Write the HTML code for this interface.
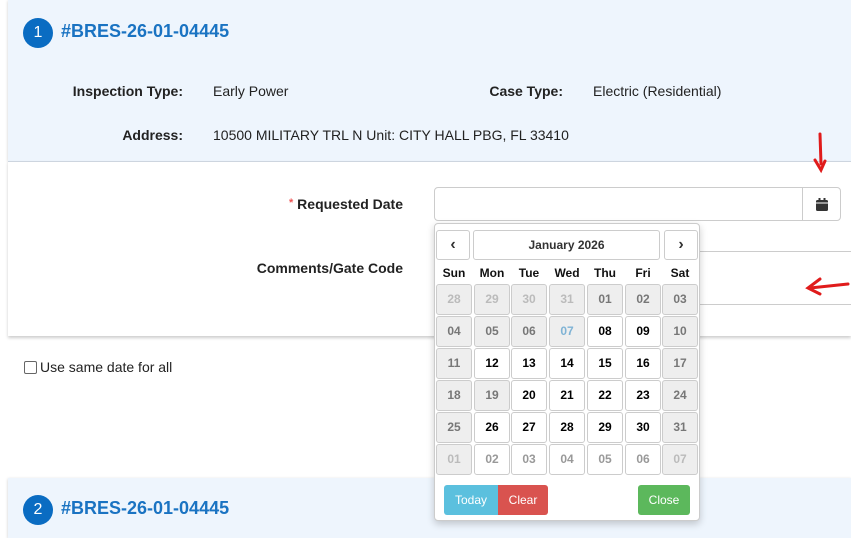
<!DOCTYPE html>
<html><head><meta charset="utf-8"><style>
*{box-sizing:border-box}
body{margin:0;width:851px;height:529px;overflow:hidden;background:#fff;font-family:"Liberation Sans",sans-serif;position:relative;color:#222}
.card{position:absolute;left:8px;right:0;background:#eef5fd;box-shadow:0 1px 3px rgba(0,0,0,.2)}
.num{position:absolute;left:15px;width:30px;height:30px;border-radius:50%;background:#0a6cc2;color:#fff;font-size:16px;text-align:center;line-height:30px}
.title{position:absolute;left:53px;font-size:18px;font-weight:bold;color:#1a73c2}
.lbl{position:absolute;font-size:14px;font-weight:bold;text-align:right}
.val{position:absolute;font-size:14px}
.white{position:absolute;left:8px;right:0;top:161px;height:175px;background:#fff;border-top:1px solid #cdd5df;box-shadow:0 2px 3px rgba(0,0,0,.2)}
.inp{position:absolute;border:1px solid #ccc;background:#fff}
.cal{position:absolute;left:434px;top:223px;width:266px;height:298px;background:#fff;border:1px solid #ccc;border-radius:4px;box-shadow:0 3px 8px rgba(0,0,0,.2);font-size:12px}
.b{position:absolute;border:1px solid #ccc;border-radius:3px;background:#fff;text-align:center;font-weight:bold;color:#333}
.d{position:absolute;width:36px;height:31px;border:1px solid #ccc;border-radius:3px;text-align:center;line-height:29px;font-weight:bold;font-size:12px}
.g{background:#eee;color:#777}.m{background:#eee;color:#bbb}.w{background:#fff;color:#000}.wm{background:#fff;color:#999}.t{background:#eee;color:#7fb3d5}
.dn{position:absolute;top:42px;width:36px;text-align:center;font-weight:bold;font-size:12px;color:#111}
.btn{position:absolute;top:261px;height:30px;color:#fff;font-size:12px;text-align:center;line-height:30px}
.c0{left:1px}.c1{left:39px}.c2{left:76px}.c3{left:114px}.c4{left:152px}.c5{left:190px}.c6{left:227px}
</style></head><body>
<div class="card" style="top:0;height:161px">
 <div class="num" style="top:18px">1</div>
 <div class="title" style="top:21px">#BRES-26-01-04445</div>
</div>
<div class="lbl" style="left:40px;width:143px;top:83px">Inspection Type:</div>
<div class="val" style="left:213px;top:83px">Early Power</div>
<div class="lbl" style="left:440px;width:123px;top:83px">Case Type:</div>
<div class="val" style="left:593px;top:83px">Electric (Residential)</div>
<div class="lbl" style="left:40px;width:143px;top:127px">Address:</div>
<div class="val" style="left:213px;top:127px">10500 MILITARY TRL N Unit: CITY HALL PBG, FL 33410</div>
<div class="white"></div>
<div class="lbl" style="left:200px;width:203px;top:196px"><span style="color:#e55;font-size:11px;vertical-align:3px">*</span> Requested Date</div>
<div class="lbl" style="left:200px;width:203px;top:260px">Comments/Gate Code</div>
<div class="inp" style="left:434px;top:187px;width:369px;height:34px;border-radius:4px 0 0 4px"></div>
<div class="inp" style="left:802px;top:187px;width:39px;height:34px;border-radius:0 4px 4px 0">
<svg style="position:absolute;left:13px;top:10px" width="12" height="13" viewBox="0 0 12 13"><rect x="0" y="2" width="12" height="11" rx="1.5" fill="#333"/><rect x="2.5" y="0" width="2" height="3" fill="#333"/><rect x="7.5" y="0" width="2" height="3" fill="#333"/><rect x="0" y="4.5" width="12" height="1" fill="#fff"/></svg></div>
<div class="inp" style="left:434px;top:251px;width:420px;height:54px;border-right:none"></div>
<svg style="position:absolute;left:800px;top:130px" width="51" height="170" viewBox="0 0 51 170"><path d="M20 4 L21 34" stroke="#e01b1b" stroke-width="3" stroke-linecap="round" fill="none"/><path d="M15 30 L21 40 L25 31" stroke="#e01b1b" stroke-width="3" stroke-linecap="round" fill="none"/><path d="M48 154 L10 158" stroke="#e01b1b" stroke-width="3" stroke-linecap="round" fill="none"/><path d="M20 149 L8 158 L20 164" stroke="#e01b1b" stroke-width="3" stroke-linecap="round" fill="none"/></svg>
<div style="position:absolute;left:24px;top:361px;width:13px;height:13px;border:1px solid #666;border-radius:2px"></div>
<div class="val" style="left:40px;top:359px">Use same date for all</div>
<div class="card" style="top:478px;height:60px">
 <div class="num" style="top:17px">2</div>
 <div class="title" style="top:20px">#BRES-26-01-04445</div>
</div>
<div class="cal">
 <div class="b" style="left:1px;top:6px;width:34px;height:30px;line-height:27px;font-size:16px">&#8249;</div>
 <div class="b" style="left:38px;top:6px;width:187px;height:30px;line-height:28px">January 2026</div>
 <div class="b" style="left:229px;top:6px;width:34px;height:30px;line-height:27px;font-size:16px">&#8250;</div>
 <div class="dn c0">Sun</div><div class="dn c1">Mon</div><div class="dn c2">Tue</div><div class="dn c3">Wed</div><div class="dn c4">Thu</div><div class="dn c5">Fri</div><div class="dn c6">Sat</div>
 <div class="btn" style="left:9px;width:54px;background:#5bc0de;border-radius:3px 0 0 3px">Today</div>
 <div class="btn" style="left:63px;width:50px;background:#d9534f;border-radius:0 3px 3px 0">Clear</div>
 <div class="btn" style="left:203px;width:52px;background:#5cb85c;border-radius:3px">Close</div>
<div class="d m c0" style="top:60px">28</div><div class="d m c1" style="top:60px">29</div><div class="d m c2" style="top:60px">30</div><div class="d m c3" style="top:60px">31</div><div class="d g c4" style="top:60px">01</div><div class="d g c5" style="top:60px">02</div><div class="d g c6" style="top:60px">03</div>
<div class="d g c0" style="top:92px">04</div><div class="d g c1" style="top:92px">05</div><div class="d g c2" style="top:92px">06</div><div class="d t c3" style="top:92px">07</div><div class="d w c4" style="top:92px">08</div><div class="d w c5" style="top:92px">09</div><div class="d g c6" style="top:92px">10</div>
<div class="d g c0" style="top:124px">11</div><div class="d w c1" style="top:124px">12</div><div class="d w c2" style="top:124px">13</div><div class="d w c3" style="top:124px">14</div><div class="d w c4" style="top:124px">15</div><div class="d w c5" style="top:124px">16</div><div class="d g c6" style="top:124px">17</div>
<div class="d g c0" style="top:156px">18</div><div class="d g c1" style="top:156px">19</div><div class="d w c2" style="top:156px">20</div><div class="d w c3" style="top:156px">21</div><div class="d w c4" style="top:156px">22</div><div class="d w c5" style="top:156px">23</div><div class="d g c6" style="top:156px">24</div>
<div class="d g c0" style="top:188px">25</div><div class="d w c1" style="top:188px">26</div><div class="d w c2" style="top:188px">27</div><div class="d w c3" style="top:188px">28</div><div class="d w c4" style="top:188px">29</div><div class="d w c5" style="top:188px">30</div><div class="d g c6" style="top:188px">31</div>
<div class="d m c0" style="top:220px">01</div><div class="d wm c1" style="top:220px">02</div><div class="d wm c2" style="top:220px">03</div><div class="d wm c3" style="top:220px">04</div><div class="d wm c4" style="top:220px">05</div><div class="d wm c5" style="top:220px">06</div><div class="d m c6" style="top:220px">07</div>
</div>
</body></html>
